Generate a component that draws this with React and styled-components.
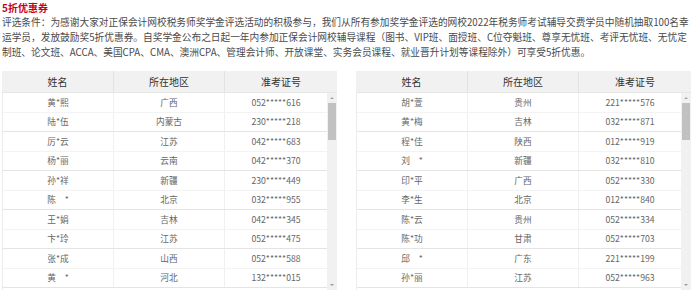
import React from 'react'
import styled, { createGlobalStyle } from 'styled-components'

const GlobalStyle = createGlobalStyle`
body {
  margin: 0;
  background: #fff;
  font-family: "Noto Sans CJK SC", "Noto Sans", sans-serif;
}
`

const Page = styled.div`
width: 698px;
height: 295px;
overflow: hidden;
`
const Title = styled.h3`
margin: 0;
padding-left: 2px;
font-size: 10px;
line-height: 15px;
font-weight: 700;
color: #c8001e;
`
const Rules = styled.p`
margin: 0;
padding: 0 0 0 2px;
font-size: 9.7px;
line-height: 15px;
color: #4a4a4a;
white-space: nowrap;
`
const Tables = styled.div`
display: flex;
gap: 19px;
padding-left: 2px;
margin-top: 11px;
`
const Wrap = styled.div`
width: 335px;
`
const Head = styled.div`
display: grid;
grid-template-columns: 111px 111px 113px;
height: 22px;
background: #f1f1f1;
border-bottom: 1px solid #e6e6e6;
box-sizing: border-box;
`
const HeadCell = styled.div`
display: flex;
align-items: center;
justify-content: center;
font-size: 10px;
color: #333;
border-left: ${p => (p.$first ? 'none' : '1px solid #e2e2e2')};
`
const Body = styled.div`
display: flex;
height: 197px;
overflow: hidden;
border-left: 1px solid #ececec;
`
const Rows = styled.div`
width: 324px;
`
const Row = styled.div`
display: grid;
grid-template-columns: 110px 111px 103px;
height: 19.5px;
box-sizing: border-box;
border-bottom: 1px solid #f3f3f3;
&:nth-child(even) {
  border-bottom-color: #e4e4e4;
}
`
const Cell = styled.div`
display: flex;
align-items: center;
justify-content: center;
font-size: 8.7px;
color: #666;
white-space: pre;
border-left: ${p => (p.$first ? 'none' : '1px solid #f0f0f0')};
`
const ScrollBar = styled.div`
width: 10px;
background: #f1f1f1;
display: flex;
flex-direction: column;
align-items: center;
`
const Arrow = styled.div`
width: 0;
height: 0;
border-left: 2px solid transparent;
border-right: 2px solid transparent;
${p => (p.$down
    ? 'border-top: 2px solid #9a9a9a; margin-top: auto; margin-bottom: 4px;'
    : 'border-bottom: 2px solid #a6a6a6; margin-top: 4px;')}
`
const Thumb = styled.div`
width: 8px;
height: 37px;
margin-top: 4px;
background: #c1c1c1;
`

const left = [
  ['黄*熙', '广西', '052*****616'],
  ['陆*伍', '内蒙古', '230*****218'],
  ['厉*云', '江苏', '042*****683'],
  ['杨*丽', '云南', '042*****370'],
  ['孙*祥', '新疆', '230*****449'],
  ['陈\u3000*', '北京', '032*****955'],
  ['王*娟', '吉林', '042*****345'],
  ['卞*玲', '江苏', '052*****475'],
  ['张*成', '山西', '052*****588'],
  ['黄\u3000*', '河北', '132*****015'],
]
const right = [
  ['胡*萱', '贵州', '221*****576'],
  ['黄*梅', '吉林', '032*****871'],
  ['程*佳', '陕西', '012*****919'],
  ['刘\u3000*', '新疆', '032*****810'],
  ['印*平', '广西', '052*****330'],
  ['李*生', '北京', '012*****840'],
  ['陈*云', '贵州', '052*****334'],
  ['陈*功', '甘肃', '052*****703'],
  ['邱\u3000*', '广东', '221*****199'],
  ['孙*丽', '江苏', '052*****963'],
]

const WinnerTable = ({ rows }) => (
  <Wrap>
    <Head>
      <HeadCell $first>姓名</HeadCell>
      <HeadCell>所在地区</HeadCell>
      <HeadCell>准考证号</HeadCell>
    </Head>
    <Body>
      <Rows>
        {rows.map((r, i) => (
          <Row key={i}>
            <Cell $first>{r[0]}</Cell>
            <Cell>{r[1]}</Cell>
            <Cell>{r[2]}</Cell>
          </Row>
        ))}
      </Rows>
      <ScrollBar>
        <Arrow />
        <Thumb />
        <Arrow $down />
      </ScrollBar>
    </Body>
  </Wrap>
)

export default function App() {
  return (
    <Page>
      <GlobalStyle />
      <Title>5折优惠券</Title>
      <Rules>
        评选条件：为感谢大家对正保会计网校税务师奖学金评选活动的积极参与，我们从所有参加奖学金评选的网校2022年税务师考试辅导交费学员中随机抽取100名幸<br />
        运学员，发放鼓励奖5折优惠券。自奖学金公布之日起一年内参加正保会计网校辅导课程（图书、VIP班、面授班、C位夺魁班、尊享无忧班、考评无忧班、无忧定<br />
        制班、论文班、ACCA、美国CPA、CMA、澳洲CPA、管理会计师、开放课堂、实务会员课程、就业晋升计划等课程除外）可享受5折优惠。
      </Rules>
      <Tables>
        <WinnerTable rows={left} />
        <WinnerTable rows={right} />
      </Tables>
    </Page>
  )
}
